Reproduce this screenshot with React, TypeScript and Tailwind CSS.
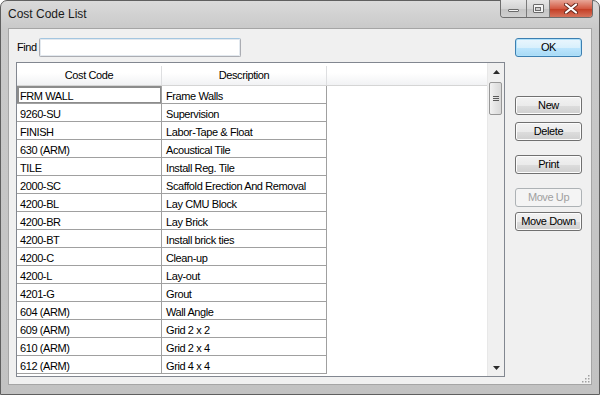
import React from 'react'

const rows: [string, string][] = [
  ['FRM WALL', 'Frame Walls'],
  ['9260-SU', 'Supervision'],
  ['FINISH', 'Labor-Tape & Float'],
  ['630 (ARM)', 'Acoustical Tile'],
  ['TILE', 'Install Reg. Tile'],
  ['2000-SC', 'Scaffold Erection And Removal'],
  ['4200-BL', 'Lay CMU Block'],
  ['4200-BR', 'Lay Brick'],
  ['4200-BT', 'Install brick ties'],
  ['4200-C', 'Clean-up'],
  ['4200-L', 'Lay-out'],
  ['4201-G', 'Grout'],
  ['604 (ARM)', 'Wall Angle'],
  ['609 (ARM)', 'Grid 2 x 2'],
  ['610 (ARM)', 'Grid 2 x 4'],
  ['612 (ARM)', 'Grid 4 x 4'],
]

function WinButton({ label, disabled, primary, className = '' }: { label: string; disabled?: boolean; primary?: boolean; className?: string }) {
  const base = 'flex h-[19px] w-[67px] items-center justify-center rounded-[3px] border text-[11px] leading-none'
  const look = disabled
    ? 'border-[#adb2b5] bg-[#f4f4f4] text-[#a0a0a0]'
    : primary
      ? 'border-[#3c7fb1] bg-[linear-gradient(to_bottom,#eaf6fd_0%,#d9f0fc_50%,#bee6fd_51%,#a7d9f5_100%)] text-black shadow-[inset_0_0_0_1px_#aee0fa]'
      : 'border-[#707070] bg-[linear-gradient(to_bottom,#f2f2f2_0%,#ebebeb_50%,#dddddd_51%,#cfcfcf_100%)] text-black shadow-[inset_0_0_0_1px_#fcfcfc]'
  return <div className={`${base} ${look} ${className}`}>{label}</div>
}

export default function App() {
  return (
    <div className="h-[395px] w-[600px] bg-white font-['Liberation_Sans',Arial,sans-serif] text-[11px] tracking-[-0.4px] text-black">
      <div className="flex h-full w-full flex-col rounded-t-[7px] border border-[#5f5f5f] bg-[linear-gradient(to_bottom,#dadada,#c9c9c9_28px,#c2c2c2)] px-[7px] pb-[9px]">
        {/* Title bar */}
        <div className="flex h-[27px] shrink-0 items-start justify-between">
          <div className="pt-[4px] text-[12px] tracking-normal text-[#1a1a1a]">Cost Code List</div>
          <div className="-mr-[1px] -mt-[1px] flex h-[18px] overflow-hidden rounded-b-[4px] border border-t-0 border-[#6d6d6d]">
            <div className="flex w-[26px] items-end justify-center border-r border-[#7a7a7a] bg-[linear-gradient(to_bottom,#e6e6e6,#d4d4d4_50%,#c4c4c4_51%,#cfcfcf)] pb-[5px]">
              <div className="h-[3px] w-[11px] rounded-[1px] border border-[#6a6a6a] bg-[#f4f4f4]" />
            </div>
            <div className="flex w-[23px] items-center justify-center border-r border-[#7a7a7a] bg-[linear-gradient(to_bottom,#e6e6e6,#d4d4d4_50%,#c4c4c4_51%,#cfcfcf)]">
              <div className="flex h-[9px] w-[11px] items-center justify-center rounded-[1px] border border-[#6a6a6a] bg-[#f4f4f4]">
                <div className="h-[4px] w-[6px] border border-[#6a6a6a] bg-[#d0d0d0]" />
              </div>
            </div>
            <div className="flex w-[42px] items-center justify-center bg-[linear-gradient(to_bottom,#e8a798,#d35a43_50%,#c23b22_51%,#d6735c)]">
              <svg width="14" height="11" viewBox="0 0 14 11">
                <path d="M2 1.5 L12 9.5 M12 1.5 L2 9.5" stroke="#6b2a1e" strokeWidth="4" strokeLinecap="round" />
                <path d="M2 1.5 L12 9.5 M12 1.5 L2 9.5" stroke="#ffffff" strokeWidth="2.2" strokeLinecap="round" />
              </svg>
            </div>
          </div>
        </div>

        {/* Client area */}
        <div className="relative flex flex-1 gap-[10px] border border-[#a5a5a5] bg-[#f0f0f0] pl-[7px] pt-[9px]">
          {/* Left column */}
          <div className="flex w-[489px] flex-col">
            <div className="flex h-[19px] items-center gap-[4px]">
              <span className="w-[18px] pl-[1px]">Find</span>
              <div className="ml-[1px] h-[19px] w-[202px] rounded-[2px] border border-[#abadb3] border-t-[#a4c6e0] bg-white shadow-[inset_0_0_0_1px_#e3e9ef]" />
            </div>

            {/* Grid */}
            <div className="mt-[5px] flex h-[315px] border border-[#828790] bg-white">
              <div className="flex flex-1 flex-col">
                <div className="flex h-[23px] shrink-0 border-b border-[#d5d5d5] bg-[linear-gradient(to_bottom,#ffffff,#ffffff_45%,#f1f2f4)] pt-[3px]">
                  <div className="flex w-[145px] items-center justify-center border-r border-[#dedfe1]">Cost Code</div>
                  <div className="flex w-[165px] items-center justify-center border-r border-[#dedfe1]">Description</div>
                  <div className="flex-1" />
                </div>
                {rows.map(([code, desc], i) => (
                  <div key={code} className="flex h-[18px] shrink-0">
                    <div
                      className={`flex w-[145px] items-center border-b border-r border-[#a0a0a0] pl-[3px] pt-[3px] ${
                        i === 0 ? 'shadow-[inset_2px_2px_0_#8c8c8c,inset_-1px_-1px_0_#8c8c8c]' : ''
                      }`}
                    >
                      {code}
                    </div>
                    <div className="flex w-[165px] items-center border-b border-r border-[#a0a0a0] pl-[4px] pt-[3px]">{desc}</div>
                  </div>
                ))}
              </div>

              {/* Scrollbar */}
              <div className="flex w-[17px] flex-col border-l border-[#e8e8e8] bg-[#f0f0f0]">
                <div className="flex h-[17px] items-center justify-center">
                  <svg width="7" height="4" viewBox="0 0 7 4">
                    <path d="M0 4 L3.5 0 L7 4 Z" fill="#2b2b2b" />
                  </svg>
                </div>
                <div className="flex-1 px-[1px] pt-[2px]">
                  <div className="flex h-[33px] w-[13px] flex-col items-center justify-center gap-[1px] rounded-[2px] border border-[#979797] bg-[linear-gradient(to_right,#f2f2f2,#e4e4e4_50%,#d9d9d9)]">
                    <div className="h-[1px] w-[6px] bg-[#5a5a5a]" />
                    <div className="h-[1px] w-[6px] bg-[#5a5a5a]" />
                    <div className="h-[1px] w-[6px] bg-[#5a5a5a]" />
                  </div>
                </div>
                <div className="flex h-[17px] items-center justify-center">
                  <svg width="7" height="4" viewBox="0 0 7 4">
                    <path d="M0 0 L7 0 L3.5 4 Z" fill="#2b2b2b" />
                  </svg>
                </div>
              </div>
            </div>
          </div>

          {/* Right column */}
          <div className="flex flex-col">
            <WinButton label="OK" primary />
            <WinButton label="New" className="mt-[39px]" />
            <WinButton label="Delete" className="mt-[7px]" />
            <WinButton label="Print" className="mt-[14px]" />
            <WinButton label="Move Up" disabled className="mt-[14px]" />
            <WinButton label="Move Down" className="mt-[5px]" />
          </div>

          {/* Size grip */}
          <svg className="absolute bottom-[1px] right-[1px]" width="10" height="10" viewBox="0 0 10 10">
            {[
              [8, 2],
              [8, 5],
              [5, 5],
              [8, 8],
              [5, 8],
              [2, 8],
            ].map(([x, y]) => (
              <rect key={`${x}-${y}`} x={x} y={y} width="1.5" height="1.5" fill="#a0a0a0" />
            ))}
          </svg>
        </div>
      </div>
    </div>
  )
}
